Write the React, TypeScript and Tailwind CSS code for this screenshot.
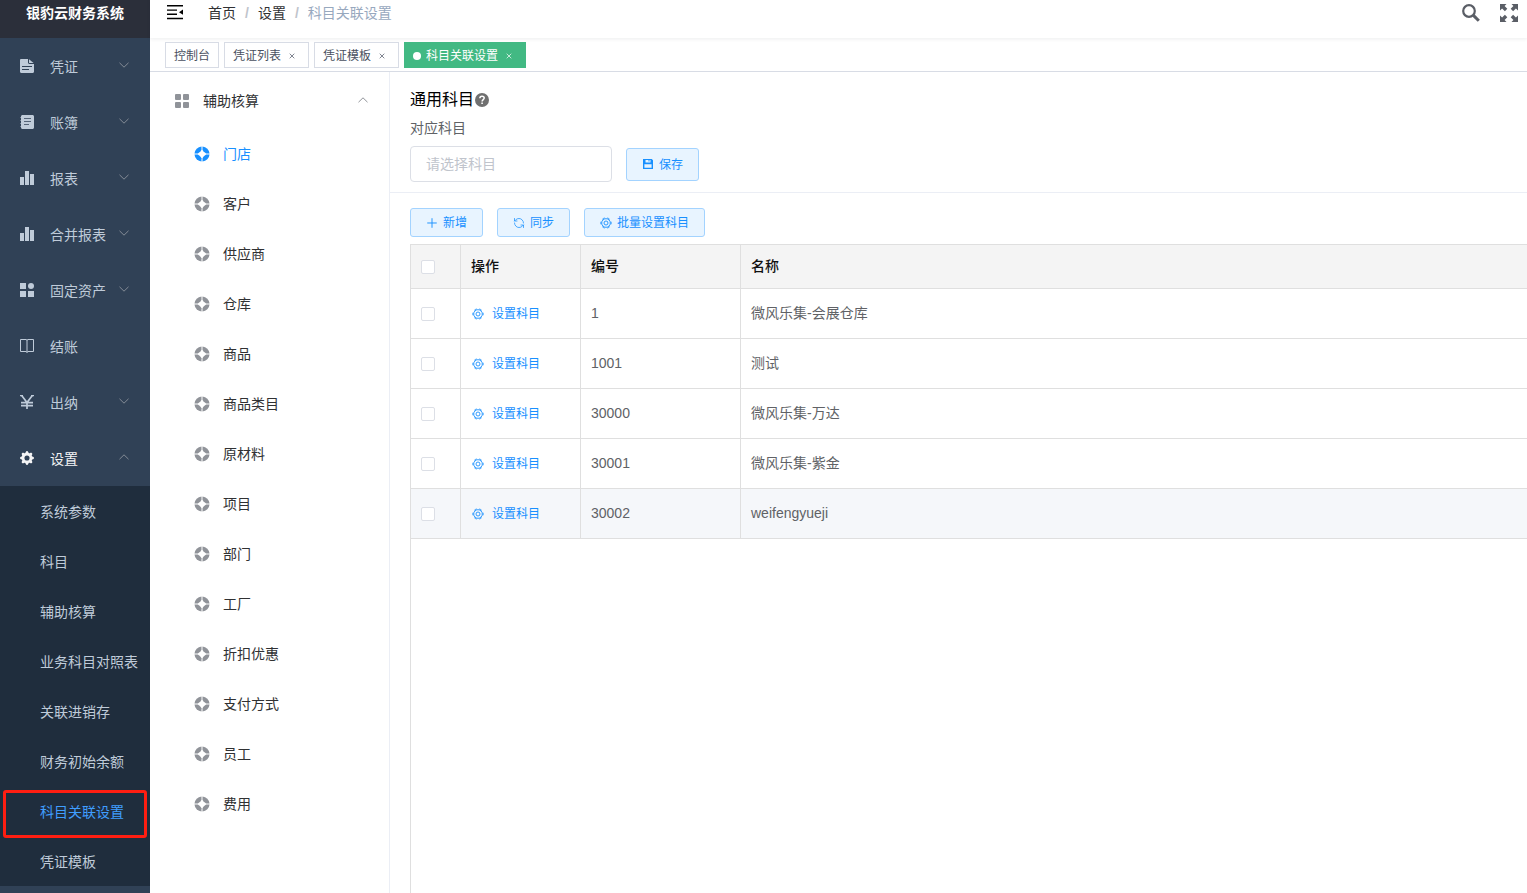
import { useState } from "react";
import type { ReactNode } from "react";
import clsx from "clsx";
import { Plus, RefreshCcw } from "lucide-react";
import { BsGearFill } from "react-icons/bs";

type MenuItem = {
  name: string;
  icon: ReactNode;
  hasArrow?: boolean;
};

type Row = {
  code: string;
  name: string;
};

const FileIcon = () => (
  <svg viewBox="0 0 14 14" className="size-3.5" fill="currentColor">
    <path
      fillRule="evenodd"
      d="M1.2 0H8v3.6c0 .8.6 1.4 1.4 1.4H14v7.8c0 .7-.5 1.2-1.2 1.2H1.2C.5 14 0 13.5 0 12.8V1.2C0 .5.5 0 1.2 0ZM2 7v1h10V7H2Zm0 3v1h7v-1H2Z"
    />
    <path d="M9 .3 13.6 4H9.6c-.4 0-.6-.2-.6-.6V.3Z" />
  </svg>
);

const BookIcon = () => (
  <svg viewBox="0 0 14 14" className="size-3.5" fill="currentColor">
    <path
      fillRule="evenodd"
      d="M2.5 0h10c.8 0 1.500.7 1.500 1.500v11c0 .8-.7 1.500-1.500 1.500h-10c-.8 0-1.500-.7-1.500-1.500v-11C1 .7 1.700 0 2.500 0ZM4 3.200v.9h7v-.9H4Zm0 3v.9h7v-.9H4Zm0 3v.9h5v-.9H4Z"
    />
    <path d="M.4 2h1v.8h-1zM.4 5h1v.8h-1zM.4 8h1v.8h-1zM.4 11h1v.8h-1z" />
  </svg>
);

const ChartIcon = () => (
  <svg viewBox="0 0 14 14" className="size-3.5" fill="currentColor">
    <path d="M0 6h4v8H0zM5 0h4v14H5zM10 3h4v11h-4z" />
  </svg>
);

const AssetIcon = () => (
  <svg viewBox="0 0 14 14" className="size-3.5" fill="currentColor">
    <path d="M0 0h6v6H0zM0 8h6v6H0zM8 8h6v6H8z" />
    <circle cx="11" cy="3" r="3" />
  </svg>
);

const ReadIcon = () => (
  <svg viewBox="0 0 14 14" className="size-3.5" fill="none" stroke="currentColor">
    <path d="M.5.5H6l1 .6 1-.6h5.5v12H8l-1 .9-1-.9H.5zM7 1v12.5" />
  </svg>
);

const YenIcon = () => (
  <svg viewBox="0 0 14 14" className="size-3.5" fill="none" stroke="currentColor" strokeWidth="1.7">
    <path d="M1.5.3 7 7.5 12.5.3M7 7v7M1 7.7h12M1 10.6h12" />
    <path d="M0 .7h3M11 .7h3" strokeWidth="1.2" />
  </svg>
);

const GridIcon = () => (
  <svg viewBox="0 0 14 14" className="size-3.5" fill="currentColor">
    <rect width="6" height="6" rx="1" />
    <rect x="8" width="6" height="6" rx="1" />
    <rect y="8" width="6" height="6" rx="1" />
    <rect x="8" y="8" width="6" height="6" rx="1" />
  </svg>
);

const BuoyIcon = () => (
  <svg viewBox="0 0 16 16" className="size-4" fill="currentColor">
    <path d="M7.5.5v3.3L6.6 5.2 5.2 6.6 3.800 7.500H.5A7.500 7.500 0 0 1 7.500.5Z" />
    <path d="M8.500.5v3.300l.9 1.400 1.400 1.400 1.400.9h3.300A7.500 7.500 0 0 0 8.500.5Z" />
    <path d="M7.500 15.500v-3.300l-.9-1.400-1.400-1.400-1.400-.9H.5a7.500 7.500 0 0 0 7 7Z" />
    <path d="M8.500 15.500v-3.300l.9-1.400 1.400-1.400 1.400-.9h3.300a7.500 7.500 0 0 1-7 7Z" />
  </svg>
);

const SettingIcon = () => (
  <svg viewBox="0 0 12 12" className="size-3" fill="none" stroke="currentColor" strokeWidth="0.9">
    <circle cx="6" cy="6" r="4.3" />
    <circle cx="6" cy="6" r="2" />
    <circle cx="6" cy="6" r="5.2" pathLength="12" strokeDasharray="1 1" strokeDashoffset="0.5" />
  </svg>
);

const Chevron = ({ up }: { up?: boolean }) => (
  <svg viewBox="0 0 10 6" className="h-1.5 w-2.5 shrink-0" fill="none" stroke="currentColor">
    <path d={up ? "M.5 5.2 5 .8l4.5 4.4" : "M.5.8 5 5.2 9.5.8"} />
  </svg>
);

const SaveIcon = () => (
  <svg viewBox="0 0 12 12" className="size-3" fill="currentColor">
    <path
      fillRule="evenodd"
      d="M1 1h8.800L11 2.200V11H1V1Zm2.500 1v2.600h5V2h-1v1.500h-1V2h-3ZM2.400 6.200v3.600h7.200V6.200H2.400Z"
    />
  </svg>
);

const HelpIcon = () => (
  <svg viewBox="0 0 14 14" className="size-3.5">
    <circle cx="7" cy="7" r="7" fill="#707070" />
    <path
      d="M4.9 5.3C4.9 4 5.8 3.2 7 3.2s2.2.8 2.2 1.9C9.2 6.6 7.1 6.7 7.1 8.4"
      fill="none"
      stroke="#fff"
      strokeWidth="1.5"
    />
    <path d="M6.3 9.4h1.6V11H6.3z" fill="#fff" />
  </svg>
);

const menus: MenuItem[] = [
  { name: "凭证", icon: <FileIcon />, hasArrow: true },
  { name: "账簿", icon: <BookIcon />, hasArrow: true },
  { name: "报表", icon: <ChartIcon />, hasArrow: true },
  { name: "合并报表", icon: <ChartIcon />, hasArrow: true },
  { name: "固定资产", icon: <AssetIcon />, hasArrow: true },
  { name: "结账", icon: <ReadIcon /> },
  { name: "出纳", icon: <YenIcon />, hasArrow: true },
  { name: "设置", icon: <BsGearFill className="size-3.5" />, hasArrow: true },
];

const settingMenus = [
  "系统参数",
  "科目",
  "辅助核算",
  "业务科目对照表",
  "关联进销存",
  "财务初始余额",
  "科目关联设置",
  "凭证模板",
];

const tags = ["控制台", "凭证列表", "凭证模板", "科目关联设置"];

const categories = [
  "门店",
  "客户",
  "供应商",
  "仓库",
  "商品",
  "商品类目",
  "原材料",
  "项目",
  "部门",
  "工厂",
  "折扣优惠",
  "支付方式",
  "员工",
  "费用",
];

const rows: Row[] = [
  { code: "1", name: "微风乐集-会展仓库" },
  { code: "1001", name: "测试" },
  { code: "30000", name: "微风乐集-万达" },
  { code: "30001", name: "微风乐集-紫金" },
  { code: "30002", name: "weifengyueji" },
];

const Sidebar = () => {
  return (
    <aside className="w-[150px] shrink-0 overflow-hidden bg-[#304156] text-sm text-[#bfcbd9]">
      <h1 className="h-[38px] bg-[#2b2f3a] text-center text-sm leading-[26px] font-bold text-white">
        银豹云财务系统
      </h1>
      <nav>
        {menus.map((item) => {
          const isOpen = item.name === "设置";
          return (
            <button
              key={item.name}
              className={clsx("flex h-14 w-full items-center pr-[21px] pl-5 text-left", isOpen && "text-[#f4f4f5]")}
            >
              {item.icon}
              <span className="ml-4 flex-1 pt-px whitespace-nowrap">{item.name}</span>
              {item.hasArrow && (
                <span className="mb-0.5 text-[#848b96]">
                  <Chevron up={isOpen} />
                </span>
              )}
            </button>
          );
        })}
        <ul className="bg-[#1f2d3d]">
          {settingMenus.map((name) => {
            const isActive = name === "科目关联设置";
            return (
              <li key={name} className="relative h-[50px]">
                <a
                  href="#"
                  className={clsx("block pt-px pl-10 leading-[50px] whitespace-nowrap", isActive && "text-[#409eff]")}
                >
                  {name}
                </a>
                {isActive && (
                  <span className="pointer-events-none absolute inset-x-[3px] top-1 h-12 rounded-[3px] border-[3px] border-[#ff1e12]" />
                )}
              </li>
            );
          })}
        </ul>
      </nav>
    </aside>
  );
};

const Navbar = () => {
  return (
    <header className="relative z-10 flex h-[38px] items-center bg-white pr-[9px] pb-3 pl-4 text-sm shadow-[0_1px_4px_rgba(0,21,41,0.08)]">
      <button aria-label="收起菜单" className="text-black">
        <svg viewBox="0 0 18 16" className="h-4 w-[18px]" fill="none" stroke="currentColor" strokeWidth="1.4">
          <path d="M1 .7h16M1 5.100h10M1 9.300h10M1 13.500h16" />
          <path d="M17 4.600v5.200l-4-2.600z" fill="currentColor" stroke="none" />
        </svg>
      </button>
      <nav className="ml-6 flex text-[#303133]">
        <a href="#">首页</a>
        <span className="mx-[9px] font-bold text-[#c0c4cc]">/</span>
        <a href="#">设置</a>
        <span className="mx-[9px] font-bold text-[#c0c4cc]">/</span>
        <span className="text-[#97a8be]">科目关联设置</span>
      </nav>
      <div className="ml-auto flex gap-5 text-[#5a5e66]">
        <button aria-label="搜索">
          <svg viewBox="0 0 18 18" className="size-[18px]" fill="none" stroke="currentColor">
            <circle cx="7" cy="7" r="5.8" strokeWidth="2.2" />
            <path d="m11.4 11.4 5.4 5.4" strokeWidth="3" />
          </svg>
        </button>
        <button aria-label="全屏">
          <svg viewBox="0 0 18 18" className="size-[18px]" fill="currentColor">
            <path d="M0 0h6.5L4.6 2.1l2.7 2.7-2.4 2.4-2.8-2.7L0 6.5z" />
            <path d="M18 0h-6.5l1.9 2.1-2.7 2.7 2.4 2.4 2.8-2.7L18 6.5z" />
            <path d="M0 18h6.5l-1.9-2.1 2.7-2.7-2.4-2.4-2.8 2.7L0 11.5z" />
            <path d="M18 18h-6.5l1.9-2.1-2.7-2.7 2.4-2.4 2.8 2.7 2.1-2z" />
          </svg>
        </button>
      </div>
    </header>
  );
};

const TagsView = () => {
  return (
    <div className="flex h-[34px] items-center gap-[5px] border-b border-[#d8dce5] px-[15px] pt-px text-xs">
      {tags.map((tag, index) => {
        const isActive = index === tags.length - 1;
        return (
          <a
            key={tag}
            href="#"
            className={clsx(
              "flex h-[26px] items-center border px-2 pt-px",
              isActive ? "border-[#42b983] bg-[#42b983] text-white" : "border-[#d8dce5] bg-white text-[#495060]"
            )}
          >
            {isActive && <span className="mr-[5px] size-2 rounded-full bg-white" />}
            {tag}
            {index > 0 && (
              <svg
                viewBox="0 0 6 6"
                className="mr-[5px] ml-2 size-1.5"
                fill="none"
                stroke="currentColor"
                strokeWidth="0.7"
              >
                <path d="m.7.7 4.6 4.6M5.3.7.7 5.3" />
              </svg>
            )}
          </a>
        );
      })}
    </div>
  );
};

const CategoryPanel = ({ selected, onSelect }: { selected: string; onSelect: (name: string) => void }) => {
  return (
    <section className="w-60 shrink-0 border-r border-[#ebeef5] text-sm text-[#303133]">
      <button className="flex h-[57px] w-full items-center pr-[21px] pl-[25px] text-left">
        <span className="text-[#909399]">
          <GridIcon />
        </span>
        <span className="ml-3.5 flex-1">辅助核算</span>
        <span className="mb-0.5 text-[#909399]">
          <Chevron up />
        </span>
      </button>
      <ul>
        {categories.map((name) => (
          <li key={name}>
            <button
              onClick={() => onSelect(name)}
              className={clsx("flex h-[50px] w-full items-center pl-11", selected === name && "text-[#1890ff]")}
            >
              <span className={selected === name ? "text-[#1890ff]" : "text-[#909399]"}>
                <BuoyIcon />
              </span>
              <span className="ml-[13px]">{name}</span>
            </button>
          </li>
        ))}
      </ul>
    </section>
  );
};

const PlainButton = ({ icon, label, className }: { icon: ReactNode; label: string; className?: string }) => (
  <button
    className={clsx(
      "flex items-center gap-[5px] rounded-[3px] border border-[#a3d3ff] bg-[#e8f4ff] px-[15px] text-xs text-[#1890ff]",
      className
    )}
  >
    {icon}
    <span className="pt-px">{label}</span>
  </button>
);

const CheckBox = ({ label }: { label: string }) => (
  <input
    type="checkbox"
    aria-label={label}
    className="block size-3.5 appearance-none rounded-xs border border-[#dcdfe6] bg-white checked:bg-[#1890ff]"
  />
);

const SubjectTable = () => {
  return (
    <div className="mt-[7px] flex-1 border-t border-l border-[#dfdfdf]">
      <table className="w-full table-fixed border-separate border-spacing-0 text-left text-sm text-[#606266]">
        <colgroup>
          <col className="w-[50px]" />
          <col className="w-[120px]" />
          <col className="w-40" />
          <col />
        </colgroup>
        <thead>
          <tr className="h-11 bg-[#f4f4f4] text-[#111]">
            <th className="border-r border-b border-[#dfdfdf] px-2.5">
              <CheckBox label="全选" />
            </th>
            <th className="border-r border-b border-[#dfdfdf] px-2.5 pb-0.5 font-medium">操作</th>
            <th className="border-r border-b border-[#dfdfdf] px-2.5 pb-0.5 font-medium">编号</th>
            <th className="border-b border-[#dfdfdf] px-2.5 pb-0.5 font-medium">名称</th>
          </tr>
        </thead>
        <tbody>
          {rows.map((row, index) => (
            <tr key={row.code} className={clsx("h-[50px]", index === rows.length - 1 && "bg-[#f5f7fa]")}>
              <td className="border-r border-b border-[#dfdfdf] px-2.5">
                <CheckBox label={row.name} />
              </td>
              <td className="border-r border-b border-[#dfdfdf] px-2.5">
                <button className="flex items-center gap-2 pl-px text-xs text-[#1890ff]">
                  <SettingIcon />
                  设置科目
                </button>
              </td>
              <td className="border-r border-b border-[#dfdfdf] px-2.5 pb-0.5">{row.code}</td>
              <td className="border-b border-[#dfdfdf] px-2.5 pb-0.5">{row.name}</td>
            </tr>
          ))}
        </tbody>
      </table>
    </div>
  );
};

const App = () => {
  const [selected, setSelected] = useState("门店");

  return (
    <div className="flex h-screen overflow-hidden bg-white font-['Liberation_Sans','Noto_Sans_CJK_SC',sans-serif]">
      <Sidebar />
      <div className="flex min-w-0 flex-1 flex-col">
        <Navbar />
        <TagsView />
        <div className="flex min-h-0 flex-1">
          <CategoryPanel selected={selected} onSelect={setSelected} />
          <main className="flex min-w-0 flex-1 flex-col">
            <div className="border-b border-[#ebeef5] px-5 pt-4 pb-2.5">
              <h2 className="flex items-center gap-px text-base text-black">
                通用科目
                <HelpIcon />
              </h2>
              <label htmlFor="subject" className="mt-1.5 block text-sm text-[#606266]">
                对应科目
              </label>
              <div className="mt-2 flex items-center gap-3.5">
                <input
                  id="subject"
                  placeholder="请选择科目"
                  className="h-9 w-[202px] rounded-sm border border-[#dcdfe6] px-[15px] text-sm outline-none placeholder:text-[#c0c4cc]"
                />
                <PlainButton className="h-[33px]" icon={<SaveIcon />} label="保存" />
              </div>
            </div>
            <div className="flex min-h-0 flex-1 flex-col pl-5">
              <div className="mt-[15px] flex gap-3.5">
                <PlainButton className="h-[29px]" icon={<Plus className="size-3 scale-125" strokeWidth={1.5} />} label="新增" />
                <PlainButton
                  className="h-[29px]"
                  icon={<RefreshCcw className="size-3" strokeWidth={1.5} />}
                  label="同步"
                />
                <PlainButton className="h-[29px]" icon={<SettingIcon />} label="批量设置科目" />
              </div>
              <SubjectTable />
            </div>
          </main>
        </div>
      </div>
    </div>
  );
};

export default App;
